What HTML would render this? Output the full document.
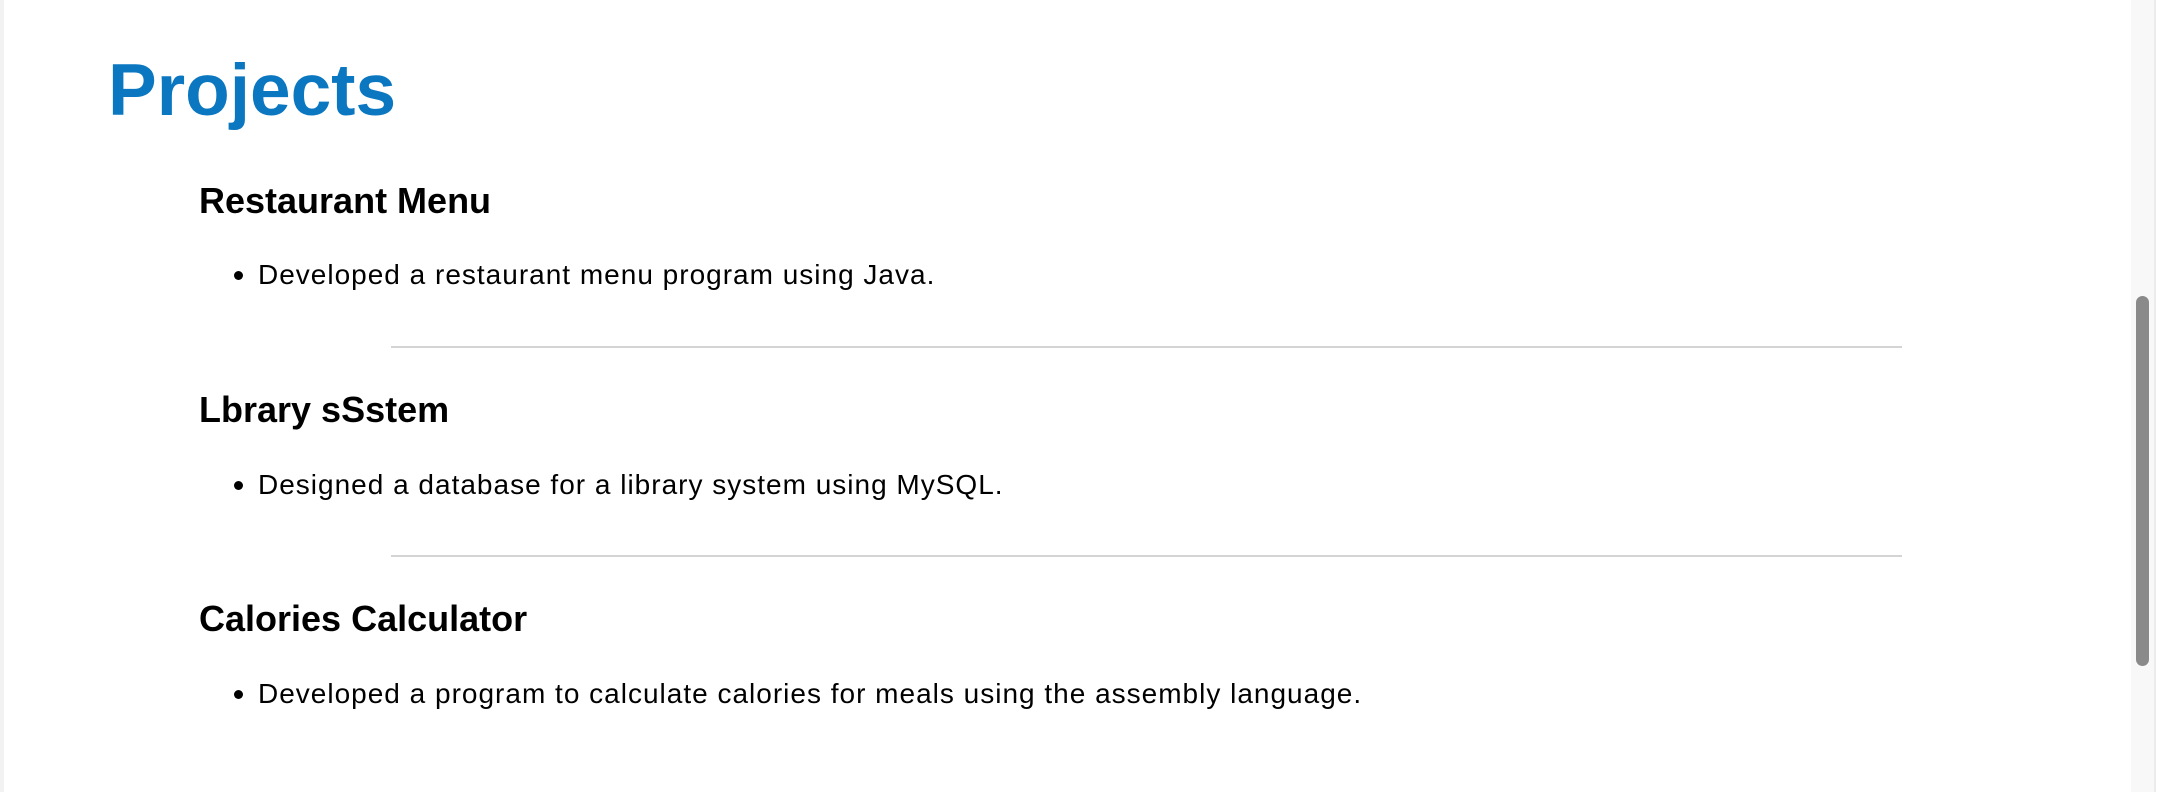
<!DOCTYPE html>
<html><head><meta charset="utf-8"><style>
html,body{margin:0;padding:0;width:2160px;height:792px;overflow:hidden;background:#fff;font-family:"Liberation Sans",sans-serif;color:#000;position:relative}
.a{position:absolute;white-space:nowrap;line-height:1}
.h1{font-size:73px;font-weight:bold;color:#0a77c0;left:108px;top:54px}
.h3{font-size:36px;font-weight:bold;left:199px}
.li{font-size:28px;left:258px;letter-spacing:1px}
.dot{position:absolute;width:9px;height:9px;border-radius:50%;background:#000;left:234px}
.hr{position:absolute;left:391px;width:1511px;height:2px;background:#d4d4d4}
</style></head><body>
<div style="position:absolute;left:0;top:0;width:4px;height:792px;background:#f2f2f2"></div>
<div class="a h1">Projects</div>
<div class="a h3" style="top:183px">Restaurant Menu</div>
<div class="dot" style="top:271px"></div>
<div class="a li" style="top:261px">Developed a restaurant menu program using Java.</div>
<div class="hr" style="top:346px"></div>
<div class="a h3" style="top:392px">Lbrary sSstem</div>
<div class="dot" style="top:481px"></div>
<div class="a li" style="top:471px">Designed a database for a library system using MySQL.</div>
<div class="hr" style="top:555px"></div>
<div class="a h3" style="top:601px">Calories Calculator</div>
<div class="dot" style="top:690px"></div>
<div class="a li" style="top:680px">Developed a program to calculate calories for meals using the assembly language.</div>
<div style="position:absolute;left:2131px;top:0;width:23px;height:792px;background:#f8f8f8"></div>
<div style="position:absolute;left:2154px;top:0;width:2px;height:792px;background:#ececec"></div>
<div style="position:absolute;left:2136px;top:296px;width:13px;height:370px;border-radius:7px;background:#8a8a8a"></div>
</body></html>
